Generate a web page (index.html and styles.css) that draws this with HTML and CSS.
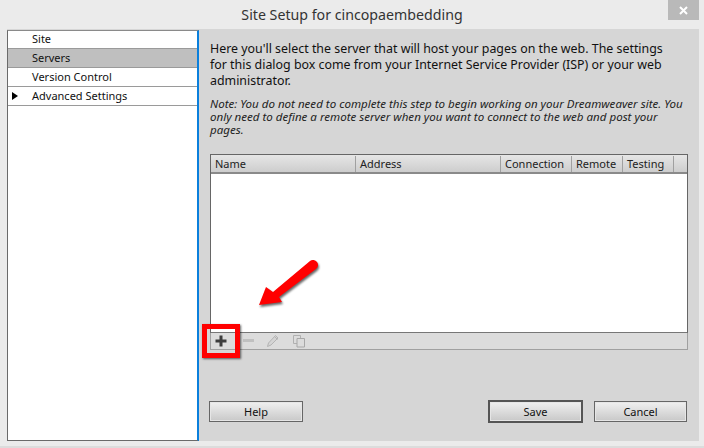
FILE: index.html
```html
<!DOCTYPE html>
<html lang="en">
<head>
<meta charset="utf-8">
<title>Site Setup</title>
<link rel="stylesheet" href="styles.css">
</head>
<body>
<div class="window">
  <header class="titlebar">
    <h1 class="title">Site Setup for cincopaembedding</h1>
    <div class="close"><svg width="9" height="9" viewBox="0 0 9 9"><path d="M1 1l7 7M8 1l-7 7" stroke="#fff" stroke-width="2" fill="none"/></svg></div>
  </header>
  <div class="client">
    <nav class="sidebar">
      <div class="nav-row">Site</div>
      <div class="nav-row selected">Servers</div>
      <div class="nav-row">Version Control</div>
      <div class="nav-row"><span class="caret"></span>Advanced Settings</div>
    </nav>
    <main class="content">
      <p class="intro">Here you'll select the server that will host your pages on the web. The settings for this dialog box come from your Internet Service Provider (ISP) or your web administrator.</p>
      <p class="note">Note: You do not need to complete this step to begin working on your Dreamweaver site. You only need to define a remote server when you want to connect to the web and post your pages.</p>
      <section class="table">
        <div class="thead">
          <div class="th th-name">Name</div>
          <div class="th th-address">Address</div>
          <div class="th th-conn">Connection</div>
          <div class="th th-remote">Remote</div>
          <div class="th th-test">Testing</div>
        </div>
        <div class="tbody"></div>
      </section>
      <div class="toolbar">
        <svg class="tool" width="14" height="14" viewBox="0 0 14 14"><path d="M7 1.500v11M1.500 7h11" stroke="#3c3c3c" stroke-width="3" fill="none"/></svg>
        <svg class="tool" width="14" height="14" viewBox="0 0 14 14"><path d="M3 6.500h11" stroke="#c0c0c0" stroke-width="3" fill="none"/></svg>
        <svg class="tool" width="14" height="14" viewBox="0 0 14 14"><path d="M1.500 12.500l1-3.500 7-7.500 2.500 2.500-7 7z" fill="#d4d4d4" stroke="#b4b4b4"/><path d="M9 3l2.500 2.500" stroke="#b4b4b4"/></svg>
        <svg class="tool" width="14" height="14" viewBox="0 0 14 14"><path d="M1.500 1.500h7v8h-7z" fill="none" stroke="#b0b0b0"/><path d="M5 4.500h7.500v8.500H5z" fill="#dcdcdc" stroke="#a8a8a8"/></svg>
      </div>
      <div class="actions">
        <button class="btn">Help</button>
        <div class="spacer"></div>
        <button class="btn btn-default">Save</button>
        <button class="btn btn-cancel">Cancel</button>
      </div>
    </main>
  </div>
</div>
<div class="callout-box"></div>
<svg class="callout-arrow" width="80" height="60" viewBox="0 0 80 60">
  <path d="M4 50L11 32l7 5L55 6a5 5 0 0 1 6 8L24 42l3 5z" fill="#f00"/>
</svg>
</body>
</html>
```
FILE: styles.css
```css
* { box-sizing: border-box; }
html, body { margin: 0; padding: 0; }
body {
  position: relative;
  width: 704px;
  height: 448px;
  overflow: hidden;
  background: #ebebeb;
  font-family: "Noto Sans", "DejaVu Sans", sans-serif;
  color: #111;
}
.window { width: 704px; height: 448px; border-bottom: 2px solid #dcdcdc; }
.titlebar { height: 29px; position: relative; display: flex; justify-content: center; align-items: center; }
.title { margin: 0; font-size: 14.200px; font-weight: 400; color: #333; }
.close {
  position: absolute; right: 5px; top: 0; width: 31px; height: 20px;
  background: #b9b9b9; display: flex; align-items: center; justify-content: center;
}
.client { display: flex; margin: 0 5px 0 7px; height: 412px; background: #d6d6d6; }
.sidebar {
  width: 192px; height: 411px; flex: none; margin-top: 1px; background: #fff;
  border: 1px solid #6a6a6a; border-top-color: #8a8a8a; border-right: 2px solid #0a7fdc;
}
.nav-row {
  height: 19px; padding-left: 24px; border-bottom: 1px solid #9a9a9a;
  font-size: 11px; line-height: 18px; position: relative;
}
.nav-row:first-child { height: 18px; line-height: 16px; }
.selected { background: #bfbfbf; }
.caret {
  position: absolute; left: 4px; top: 5px; width: 0; height: 0;
  border-left: 6px solid #000; border-top: 4px solid transparent; border-bottom: 4px solid transparent;
}
.content { flex: 1; padding: 12px 11px 0 11px; }
.intro { margin: 0; font-size: 12.400px; line-height: 16px; width: 465px; }
.note { margin: 8px 0 0; font-size: 11.550px; line-height: 13px; font-style: italic; color: #222; width: 478px; height: 45px; }
.table { margin-top: 12px; height: 179px; border: 1px solid #666; border-bottom-color: #777; background: #fff; }
.thead {
  display: flex; height: 19px; background: linear-gradient(#e6e6e6, #cdcdcd);
  border-bottom: 2px solid #8a8a8a; font-size: 11px;
}
.th { padding-left: 4px; border-right: 1px solid #a0a0a0; height: 16px; margin-top: 1px; line-height: 15px; color: #222; }
.th-name { width: 145px; }
.th-address { width: 145px; }
.th-conn { width: 71px; }
.th-remote { width: 51px; }
.th-test { width: 51px; }
.tbody { height: 158px; }
.toolbar {
  height: 17px; display: flex; align-items: center; gap: 12px; padding-left: 3px;
  border: 1px solid #a0a0a0; border-top: 0; background: #dcdcdc;
}
.actions { display: flex; align-items: center; margin: 50px 1px 0 -1px; gap: 11px; height: 23px; }
.spacer { flex: 1; }
.btn {
  width: 94px; height: 21px; padding: 0; font: inherit; font-size: 11px; color: #111;
  border: 1px solid #666; background: linear-gradient(#f0f0f0, #c8c8c8);
  box-shadow: inset 0 0 0 1px #e6e6e6;
}
.btn-default { width: 95px; height: 23px; border: 2px solid #555; }
.btn-cancel { width: 93px; }
.callout-box {
  position: absolute; left: 202px; top: 324px; width: 38px; height: 34px;
  border: 5px solid #f00; box-shadow: 1px 1px 2px rgba(0,0,0,.6);
}
.callout-arrow {
  position: absolute; left: 255px; top: 255px;
  filter: drop-shadow(1px 2px 1px rgba(0,0,0,.6));
}
```
